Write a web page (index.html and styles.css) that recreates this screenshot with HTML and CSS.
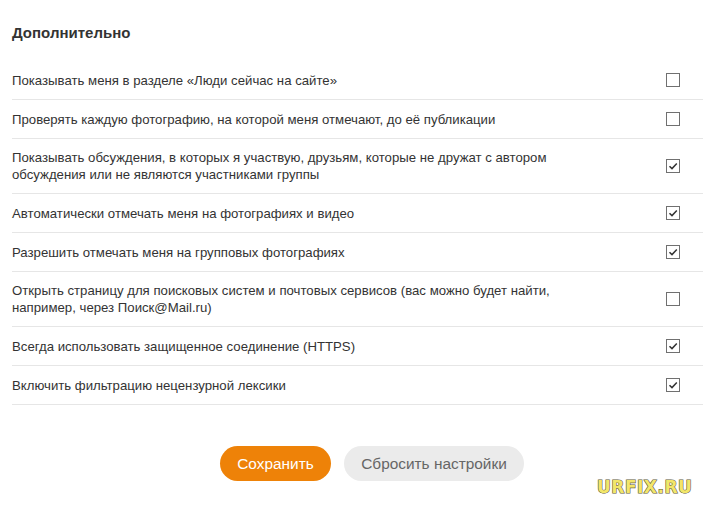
FILE: index.html
```html
<!DOCTYPE html>
<html lang="ru">
<head>
<meta charset="utf-8">
<title>Дополнительно</title>
<link rel="stylesheet" href="styles.css">
</head>
<body>
<div class="page">
  <h2 class="title">Дополнительно</h2>
  <div class="list">
    <div class="row"><div class="label">Показывать меня в разделе «Люди сейчас на сайте»</div><span class="cbwrap"><span class="cb"></span></span></div>
    <div class="row"><div class="label">Проверять каждую фотографию, на которой меня отмечают, до её публикации</div><span class="cbwrap"><span class="cb"></span></span></div>
    <div class="row"><div class="label">Показывать обсуждения, в которых я участвую, друзьям, которые не дружат с автором обсуждения или не являются участниками группы</div><span class="cbwrap"><span class="cb on"><svg viewBox="0 0 14 14" width="14" height="14"><path d="M3.5 7.2 L6 9.6 L10.8 4.6" fill="none" stroke="#333" stroke-width="1.5"/></svg></span></span></div>
    <div class="row"><div class="label">Автоматически отмечать меня на фотографиях и видео</div><span class="cbwrap"><span class="cb on"><svg viewBox="0 0 14 14" width="14" height="14"><path d="M3.5 7.2 L6 9.6 L10.8 4.6" fill="none" stroke="#333" stroke-width="1.5"/></svg></span></span></div>
    <div class="row"><div class="label">Разрешить отмечать меня на групповых фотографиях</div><span class="cbwrap"><span class="cb on"><svg viewBox="0 0 14 14" width="14" height="14"><path d="M3.5 7.2 L6 9.6 L10.8 4.6" fill="none" stroke="#333" stroke-width="1.5"/></svg></span></span></div>
    <div class="row"><div class="label">Открыть страницу для поисковых систем и почтовых сервисов (вас можно будет найти, например, через Поиск@Mail.ru)</div><span class="cbwrap"><span class="cb"></span></span></div>
    <div class="row"><div class="label">Всегда использовать защищенное соединение (HTTPS)</div><span class="cbwrap"><span class="cb on"><svg viewBox="0 0 14 14" width="14" height="14"><path d="M3.5 7.2 L6 9.6 L10.8 4.6" fill="none" stroke="#333" stroke-width="1.5"/></svg></span></span></div>
    <div class="row"><div class="label">Включить фильтрацию нецензурной лексики</div><span class="cbwrap"><span class="cb on"><svg viewBox="0 0 14 14" width="14" height="14"><path d="M3.5 7.2 L6 9.6 L10.8 4.6" fill="none" stroke="#333" stroke-width="1.5"/></svg></span></span></div>
  </div>
  <div class="actions">
    <button class="btn btn-primary">Сохранить</button>
    <button class="btn btn-secondary">Сбросить настройки</button>
  </div>
</div>
<div class="watermark">URFIX.RU</div>
</body>
</html>
```
FILE: styles.css
```css
html, body {
  margin: 0;
  padding: 0;
  background: #fff;
}
body {
  font-family: "Liberation Sans", Arial, sans-serif;
  color: #333;
  width: 703px;
  height: 506px;
  overflow: hidden;
  position: relative;
}
.page {
  padding: 24px 0 0 12px;
}
.title {
  margin: 0 0 19px;
  font-size: 15px;
  line-height: 18px;
  font-weight: bold;
  color: #333;
}
.list {
  display: flex;
  flex-direction: column;
}
.row {
  display: flex;
  align-items: center;
  justify-content: space-between;
  padding: 10px 23px 10px 0;
  border-bottom: 1px solid #e6e6e6;
  font-size: 13.2px;
  line-height: 17px;
}
.label {
  max-width: 560px;
}
.cbwrap {
  flex: none;
  height: 18px;
  display: flex;
  align-items: center;
}
.cb {
  width: 12px;
  height: 12px;
  border: 1px solid #707070;
  background: #fff;
  position: relative;
}
.cb svg {
  position: absolute;
  left: -1px;
  top: -1px;
}
.actions {
  display: flex;
  gap: 13px;
  padding: 41px 0 0 208px;
}
.btn {
  font-family: "Liberation Sans", Arial, sans-serif;
  font-size: 15.4px;
  height: 35px;
  border: none;
  border-radius: 18px;
  padding: 0 10px;
  cursor: pointer;
}
.btn-primary {
  background: #ee8208;
  color: #fff;
  width: 111px;
}
.btn-secondary {
  background: #ebebeb;
  color: #666;
  width: 180px;
}
.watermark {
  position: absolute;
  left: 597px;
  top: 477px;
  font-family: "DejaVu Sans", sans-serif;
  font-weight: bold;
  font-size: 17px;
  letter-spacing: 0.5px;
  color: #f2e66a;
  -webkit-text-stroke: 1.2px #5f5a3c;
  paint-order: stroke fill;
}
```
